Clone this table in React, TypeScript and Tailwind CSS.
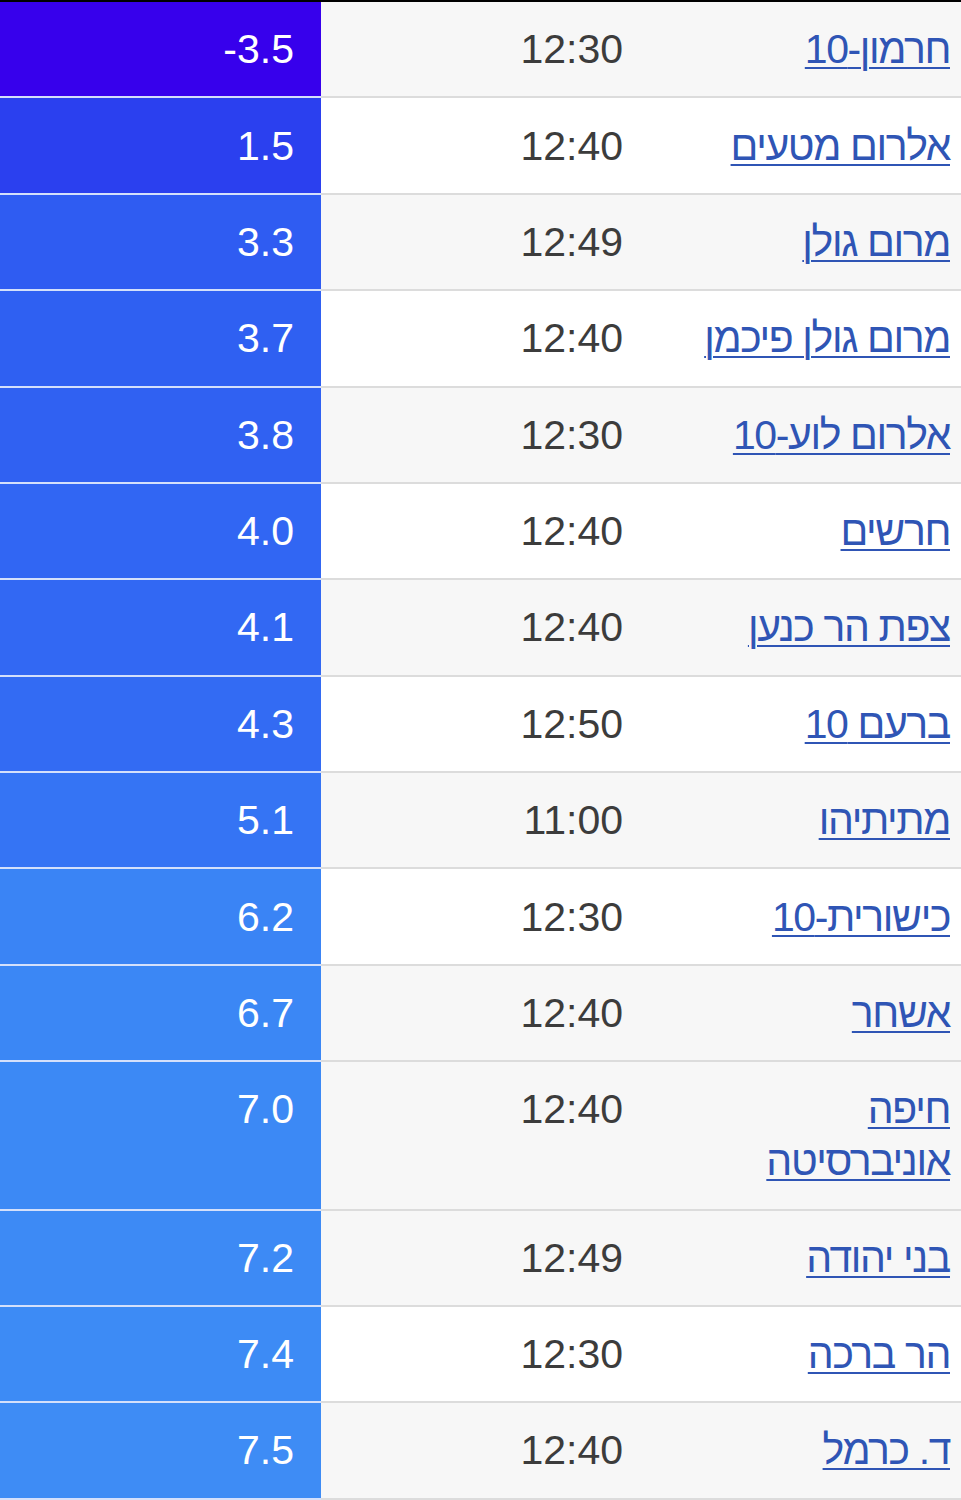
import React from "react";

type Row = { name: string; time: string; temp: string; bg: string; gray: boolean };

const rows: Row[] = [
  { name: "חרמון-10", time: "12:30", temp: "-3.5", bg: "#3700ec", gray: true },
  { name: "אלרום מטעים", time: "12:40", temp: "1.5", bg: "#2b40ef", gray: false },
  { name: "מרום גולן", time: "12:49", temp: "3.3", bg: "#2f5cf2", gray: true },
  { name: "מרום גולן פיכמן", time: "12:40", temp: "3.7", bg: "#2f60f2", gray: false },
  { name: "אלרום לוע-10", time: "12:30", temp: "3.8", bg: "#3061f2", gray: true },
  { name: "חרשים", time: "12:40", temp: "4.0", bg: "#3166f3", gray: false },
  { name: "צפת הר כנען", time: "12:40", temp: "4.1", bg: "#3268f3", gray: true },
  { name: "ברעם 10", time: "12:50", temp: "4.3", bg: "#336bf3", gray: false },
  { name: "מתיתיהו", time: "11:00", temp: "5.1", bg: "#3574f4", gray: true },
  { name: "כישורית-10", time: "12:30", temp: "6.2", bg: "#3a84f5", gray: false },
  { name: "אשחר", time: "12:40", temp: "6.7", bg: "#3b87f5", gray: true },
  { name: "חיפה אוניברסיטה", time: "12:40", temp: "7.0", bg: "#3c89f5", gray: true },
  { name: "בני יהודה", time: "12:49", temp: "7.2", bg: "#3d8af5", gray: true },
  { name: "הר ברכה", time: "12:30", temp: "7.4", bg: "#3d8bf5", gray: false },
  { name: "ד. כרמל", time: "12:40", temp: "7.5", bg: "#3e8cf5", gray: true },
];

export default function App() {
  return (
    <div
      dir="rtl"
      className="w-[961px] border-t-2 border-black bg-white text-[41px] leading-[52px]"
      style={{ fontFamily: '"Liberation Sans", Arial, "Noto Sans", sans-serif' }}
    >
      {rows.map((r, i) => (
        <div key={i} className={`flex ${r.gray ? "bg-[#f7f7f7]" : "bg-white"}`}>
          <div className="flex-1 border-b-2 border-[#dcdcdc] py-[21.2px] pr-[11px] pl-[32px]">
            <a
              href="#"
              className="tracking-[-1.4px] text-[#2f55b5] underline underline-offset-[4px] decoration-[2px]"
            >
              {r.name}
            </a>
          </div>
          <div className="w-[330px] border-b-2 border-[#dcdcdc] py-[21.2px] pr-[28px] text-[#3c3c3c]">
            {r.time}
          </div>
          <div
            dir="ltr"
            className="w-[321px] border-b-2 border-[#d4e0fb] py-[21.2px] pr-[27px] text-right text-white"
            style={{ backgroundColor: r.bg }}
          >
            {r.temp}
          </div>
        </div>
      ))}
    </div>
  );
}
